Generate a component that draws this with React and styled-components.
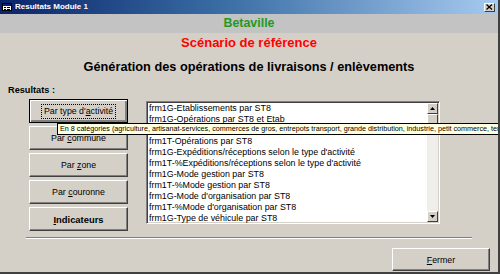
import styled, { createGlobalStyle } from "styled-components";

const GlobalStyle = createGlobalStyle`
  html, body {
    margin: 0;
    padding: 0;
    background: #d4d0c8;
  }
  * {
    box-sizing: border-box;
  }
`;

const Window = styled.div`
  position: relative;
  width: 500px;
  height: 274px;
  background: #d4d0c8;
  border-right: 2px solid #404040;
  border-bottom: 2px solid #404040;
  font-family: "Liberation Sans", Arial, sans-serif;
  overflow: hidden;
  display: flex;
  flex-direction: column;
`;

const TitleBar = styled.div`
  height: 14px;
  display: flex;
  align-items: center;
  padding: 0 3px 0 2px;
  background: linear-gradient(to right, #0a246a 0%, #3a6ea5 45%, #a6caf0 100%);
  color: #fff;
  font-weight: bold;
  font-size: 8px;
  gap: 3px;
`;

const TitleText = styled.span`
  flex: 1;
  line-height: 14px;
`;

const CloseBox = styled.div`
  width: 11px;
  height: 9px;
  background: #d4d0c8;
  border-top: 1px solid #fff;
  border-left: 1px solid #fff;
  border-right: 1px solid #404040;
  border-bottom: 1px solid #404040;
  display: flex;
  align-items: center;
  justify-content: center;
`;

const HeaderBand = styled.div`
  height: 19px;
  background: #c3c3c3;
  color: #1f9a1f;
  font-weight: bold;
  font-size: 12.4px;
  text-align: center;
  line-height: 19px;
`;

const Scenario = styled.div`
  margin-top: 2px;
  color: #ff0000;
  font-weight: bold;
  font-size: 13px;
  text-align: center;
  line-height: 16px;
`;

const MainTitle = styled.div`
  margin-top: 8px;
  font-weight: bold;
  font-size: 12.75px;
  text-align: center;
  line-height: 16px;
  color: #000;
`;

const Label = styled.div`
  margin: 9px 0 0 8px;
  font-size: 9.2px;
  font-weight: bold;
  line-height: 12px;
  color: #000;
`;

const Row = styled.div`
  display: flex;
  margin: 3px 0 0 29px;
  align-items: flex-start;
`;

const Buttons = styled.div`
  display: flex;
  flex-direction: column;
  gap: 3px;
  width: 99px;
`;

const Button = styled.button`
  width: ${(p) => p.$w || 99}px;
  height: ${(p) => p.$h || 24}px;
  padding: 0;
  background: #d4d0c8;
  font-family: "Liberation Sans", Arial, sans-serif;
  font-size: ${(p) => (p.$bold ? 9.4 : 8.8)}px;
  font-weight: ${(p) => (p.$bold ? "bold" : "normal")};
  color: #000;
  border: 1px solid;
  border-color: ${(p) => (p.$default ? "#000" : "#fff #404040 #404040 #fff")};
  box-shadow: ${(p) =>
    p.$default
      ? "inset 1px 1px 0 #fff, inset -2px -2px 0 #808080"
      : "inset -1px -1px 0 #808080"};
  display: flex;
  align-items: center;
  justify-content: center;
  cursor: default;
`;

const Focus = styled.span`
  border: 1px dotted #000;
  padding: 1px 2px;
  line-height: 11px;
`;

const Key = styled.span`
  text-decoration: underline;
`;

const ListBox = styled.div`
  margin: 2px 0 0 18px;
  width: 294px;
  height: 123px;
  background: #fff;
  border-top: 1px solid #808080;
  border-left: 1px solid #808080;
  border-right: 1px solid #fff;
  border-bottom: 1px solid #fff;
  box-shadow: inset 1px 1px 0 #404040, inset -1px -1px 0 #d4d0c8;
  display: flex;
  padding: 1px;
`;

const Items = styled.ul`
  flex: 1;
  margin: 0;
  padding: 0 0 0 1px;
  list-style: none;
`;

const Item = styled.li`
  font-size: 8.9px;
  line-height: 11px;
  height: 11px;
  white-space: nowrap;
  color: #000;
`;

const ScrollBar = styled.div`
  width: 11px;
  display: flex;
  flex-direction: column;
  background: #efeeea;
`;

const ScrollBtn = styled.div`
  height: 11px;
  background: #d4d0c8;
  border-top: 1px solid #fff;
  border-left: 1px solid #fff;
  border-right: 1px solid #404040;
  border-bottom: 1px solid #404040;
  display: flex;
  align-items: center;
  justify-content: center;
`;

const Track = styled.div`
  flex: 1;
`;

const Separator = styled.div`
  margin: 6px 0 0 26px;
  width: 446px;
  height: 2px;
  border-top: 1px solid #808080;
  border-bottom: 1px solid #fff;
`;

const Footer = styled.div`
  display: flex;
  justify-content: flex-end;
  padding: 9px 8px 0 0;
`;

const Tooltip = styled.div`
  position: absolute;
  left: 57px;
  top: 123px;
  height: 12px;
  padding: 0 2px;
  background: #ffffe1;
  border: 1px solid #000;
  font-size: 7.2px;
  line-height: 10px;
  white-space: nowrap;
  color: #000;
`;

const Arrow = ({ up }) => (
  <svg width="5" height="3" viewBox="0 0 5 3">
    <path d={up ? "M2.5 0 L5 3 L0 3 Z" : "M0 0 L5 0 L2.5 3 Z"} fill="#000" />
  </svg>
);

const FormIcon = () => (
  <svg width="10" height="8" viewBox="0 0 10 8">
    <rect x="0.5" y="0.5" width="9" height="7" fill="#fff" stroke="#000" />
    <rect x="1" y="1" width="8" height="2" fill="#0a246a" />
    <rect x="2" y="4" width="2" height="1" fill="#000" />
    <rect x="5" y="4" width="3" height="1" fill="#000" />
    <rect x="2" y="6" width="2" height="1" fill="#000" />
    <rect x="5" y="6" width="3" height="1" fill="#000" />
  </svg>
);

const items = [
  "frm1G-Etablissements par ST8",
  "frm1G-Opérations par ST8 et Etab",
  "frm1T-Etablissements par ST8",
  "frm1T-Opérations par ST8",
  "frm1G-Expéditions/réceptions selon le type d'activité",
  "frm1T-%Expéditions/réceptions selon le type d'activité",
  "frm1G-Mode gestion par ST8",
  "frm1T-%Mode gestion par ST8",
  "frm1G-Mode d'organisation par ST8",
  "frm1T-%Mode d'organisation par ST8",
  "frm1G-Type de véhicule par ST8",
];

export default function App() {
  return (
    <Window>
      <GlobalStyle />
      <TitleBar>
        <FormIcon />
        <TitleText>Resultats Module 1</TitleText>
        <CloseBox>
          <svg width="7" height="6" viewBox="0 0 7 6">
            <path d="M0.5 0.5 L6 5.5 M6 0.5 L0.5 5.5" stroke="#000" strokeWidth="1.3" />
          </svg>
        </CloseBox>
      </TitleBar>
      <HeaderBand>Betaville</HeaderBand>
      <Scenario>Scénario de référence</Scenario>
      <MainTitle>Génération des opérations de livraisons / enlèvements</MainTitle>
      <Label>Resultats :</Label>
      <Row>
        <Buttons>
          <Button $default>
            <Focus>
              Par type d'<Key>a</Key>ctivité
            </Focus>
          </Button>
          <Button>
            <span>
              Par <Key>c</Key>ommune
            </span>
          </Button>
          <Button>
            <span>
              Par <Key>z</Key>one
            </span>
          </Button>
          <Button>
            <span>
              Par <Key>c</Key>ouronne
            </span>
          </Button>
          <Button $bold>
            <span>
              <Key>I</Key>ndicateurs
            </span>
          </Button>
        </Buttons>
        <ListBox>
          <Items>
            {items.map((t) => (
              <Item key={t}>{t}</Item>
            ))}
          </Items>
          <ScrollBar>
            <ScrollBtn>
              <Arrow up />
            </ScrollBtn>
            <ScrollBtn />
            <Track />
            <ScrollBtn>
              <Arrow />
            </ScrollBtn>
          </ScrollBar>
        </ListBox>
      </Row>
      <Separator />
      <Footer>
        <Button $w={98} $h={23}>
          <span>
            <Key>F</Key>ermer
          </span>
        </Button>
      </Footer>
      <Tooltip>
        En 8 catégories (agriculture, artisanat-services, commerces de gros, entrepots transport, grande distribution,
        industrie, petit commerce, tertiaire)
      </Tooltip>
    </Window>
  );
}
